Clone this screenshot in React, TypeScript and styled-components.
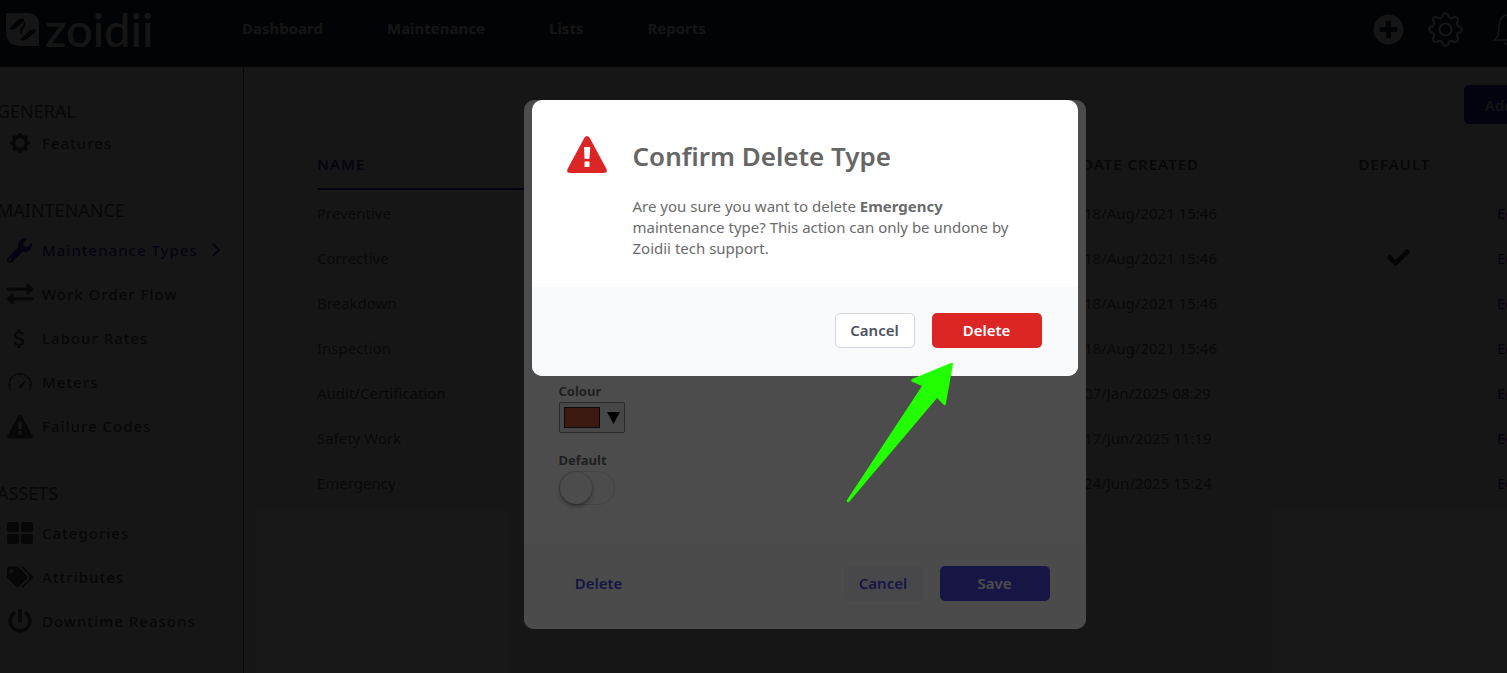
import React from 'react';
import styled, { createGlobalStyle } from 'styled-components';
import { FaWrench, FaExchangeAlt, FaTags, FaPowerOff, FaPlusCircle, FaCheck } from 'react-icons/fa';
import { MdAttachMoney } from 'react-icons/md';
import { BsGear } from 'react-icons/bs';

const GlobalStyle = createGlobalStyle`
  *, *::before, *::after { box-sizing: border-box; }
  body {
    margin: 0;
    overflow: hidden;
    background: #fff;
    font-family: 'Noto Sans', 'Open Sans', sans-serif;
    font-size: 15px;
    color: #6b6b6b;
  }
  button, input { font: inherit; }
  button { cursor: pointer; }
`;

const Frame = styled.div`
  position: relative;
  width: calc(100% + 102px);
  height: 100vh;
  overflow: hidden;
  display: flex;
  flex-direction: column;
`;

const TopBar = styled.header`
  display: flex;
  align-items: center;
  flex: none;
  height: 67px;
  padding: 0 86px 9px 6px;
  background: #1c2333;
`;

const Brand = styled.a`
  display: flex;
  align-items: center;
  gap: 6px;
  width: 236px;
  color: #f3f4f6;
  font-family: Lato, sans-serif;
  font-size: 47px;
  font-weight: 500;
  line-height: 46px;
  text-decoration: none;
`;

const MainNav = styled.nav`
  display: flex;
  gap: 64px;
  flex: 1;
  padding-bottom: 2px;
`;

const NavLink = styled.a`
  color: #e5e7eb;
  font-weight: 700;
  text-decoration: none;
`;

const TopActions = styled.div`
  display: flex;
  align-items: center;
  gap: 24px;
  color: #f3f4f6;
`;

const IconButton = styled.button`
  display: flex;
  padding: 0;
  border: 0;
  background: none;
  color: inherit;
`;

const Columns = styled.div`
  display: flex;
  flex: 1;
  min-height: 0;
`;

const Sidebar = styled.aside`
  display: flex;
  flex-direction: column;
  gap: 36px;
  flex: none;
  width: 244px;
  padding-top: 33px;
  border-right: 1px solid #666;
`;

const Group = styled.section``;

const GroupTitle = styled.h2<{ $gap: number }>`
  margin: 0 0 ${(p) => p.$gap}px -3px;
  color: #555;
  font-size: 18px;
  font-weight: 400;
  line-height: 23px;
`;

const GroupItems = styled.div`
  display: flex;
  flex-direction: column;
  gap: 4px;
`;

const SideLink = styled.a<{ $active?: boolean }>`
  display: flex;
  align-items: center;
  gap: 9px;
  height: 40px;
  padding-left: 6px;
  color: ${(p) => (p.$active ? '#3a33b8' : '#555')};
  font-weight: 500;
  letter-spacing: 1px;
  text-decoration: none;
`;

const SideIcon = styled.span`
  display: flex;
  justify-content: center;
  width: 27px;
`;

const Chevron = styled.svg`
  margin-left: 5px;
`;

const Main = styled.main`
  display: flex;
  flex-direction: column;
  flex: 1;
  padding: 18px 36px 0 54px;
`;

const Toolbar = styled.div`
  display: flex;
  justify-content: flex-end;
  margin-bottom: 16px;
`;

const AddButton = styled.button`
  width: 109px;
  height: 39px;
  border: 0;
  border-radius: 5px;
  background: #2a22a8;
  color: #d1d5db;
  font-weight: 600;
`;

const TypesTable = styled.table`
  width: 100%;
  table-layout: fixed;
  border-collapse: collapse;
  text-align: left;
`;

const HeadCell = styled.th<{ $center?: boolean; $sorted?: boolean }>`
  height: 50px;
  padding: ${(p) => (p.$sorted ? '0 0 0 19px' : '0 0 2px')};
  background: #f9fafb;
  color: ${(p) => (p.$sorted ? '#3a33b8' : '#555')};
  font-weight: 600;
  letter-spacing: 1px;
  text-align: ${(p) => (p.$center ? 'center' : 'left')};
`;

const SortedLabel = styled.span`
  display: block;
  height: 50px;
  border-bottom: 2px solid #2a22a8;
  line-height: 48px;
`;

const Cell = styled.td<{ $first?: boolean; $center?: boolean }>`
  height: 45px;
  padding: ${(p) => (p.$first ? '0 0 0 19px' : p.$center ? '0 0 0 8px' : '0 0 0 2px')};
  color: #666;
  text-align: ${(p) => (p.$center ? 'center' : 'left')};

  svg { display: block; margin: 0 auto; color: #333; }
`;

const EditLink = styled.a`
  padding-left: 28px;
  color: #3a33b8;
  text-decoration: none;
`;

const Overlay = styled.div`
  position: absolute;
  inset: 0;
  display: flex;
  align-items: flex-start;
  justify-content: center;
  padding-top: 100px;
  background: rgba(0, 0, 0, 0.7);
`;

const EditDialog = styled.div`
  display: flex;
  flex-direction: column;
  width: 562px;
  min-height: 529px;
  border-radius: 10px;
  background: #fff;
  overflow: hidden;
`;

const EditForm = styled.div`
  display: flex;
  flex-direction: column;
  align-items: flex-start;
  justify-content: flex-end;
  flex: 1;
  padding: 0 35px 39px;
`;

const FieldLabel = styled.label`
  color: #6b6b6b;
  font-size: 13px;
  font-weight: 700;
  line-height: 21px;
`;

const ColourPicker = styled.button`
  display: flex;
  align-items: center;
  gap: 7px;
  width: 66px;
  height: 31px;
  margin-bottom: 17px;
  padding: 0 4px;
  border: 1px solid #919191;
  border-radius: 2px;
  background: #eee;
`;

const Swatch = styled.span`
  width: 36px;
  height: 21px;
  border: 1px solid #222;
  background: #c8553a;
`;

const Toggle = styled.input`
  appearance: none;
  display: flex;
  align-items: center;
  width: 56px;
  height: 34px;
  margin: 0;
  border: 1px solid #e2e2e2;
  border-radius: 17px;

  &::before {
    content: '';
    width: 32px;
    height: 32px;
    border-radius: 50%;
    background: #fff;
    box-shadow: 0 2px 4px rgba(0, 0, 0, 0.4), 0 0 1px rgba(0, 0, 0, 0.3);
  }
`;

const DialogFooter = styled.footer<{ $spread?: boolean }>`
  display: flex;
  justify-content: ${(p) => (p.$spread ? 'space-between' : 'flex-end')};
  padding: ${(p) => (p.$spread ? '22px 36px 28px' : '26px 36px 28px')};
  background: ${(p) => (p.$spread ? '#fcfcfc' : '#f9fafc')};
`;

const Actions = styled.div`
  display: flex;
  gap: 17px;
`;

type Tone = 'plain' | 'danger' | 'soft' | 'primary' | 'link';

const tones: Record<Tone, string> = {
  plain: 'min-width: 80px; background: #fff; color: #4b5160; border: 1px solid #d4d5e0;',
  danger: 'min-width: 110px; background: #dc2626; color: #fff;',
  soft: 'min-width: 79px; background: #f0f0fa; color: #4f46e5;',
  primary: 'min-width: 110px; background: #4f46e5; color: #fff;',
  link: 'min-width: 78px; background: none; color: #4f46e5;',
};

const Button = styled.button<{ $tone: Tone }>`
  height: 35px;
  padding: 0 0 2px;
  border: 0;
  border-radius: 5px;
  font-weight: 600;
  ${(p) => tones[p.$tone]}
`;

const ConfirmDialog = styled.div`
  position: relative;
  width: 546px;
  border-radius: 10px;
  background: #fff;
`;

const ConfirmBody = styled.div`
  display: flex;
  gap: 26px;
  padding: 36px 35px 28px;
`;

const DangerMark = styled.span`
  color: #dc2626;
`;

const ConfirmTitle = styled.h1`
  margin: 0 0 20px;
  color: #666;
  font-size: 26px;
  font-weight: 600;
  line-height: 40px;
`;

const ConfirmText = styled.p`
  max-width: 400px;
  margin: 0;
  color: #6b6b6b;
  line-height: 21px;
`;

const ConfirmFooter = styled(DialogFooter)`
  border-radius: 0 0 10px 10px;
`;

const Pointer = styled.svg`
  position: absolute;
  left: 314px;
  top: 262px;
`;

const LogoMark = () => (
  <svg width="33" height="33" viewBox="0 0 33 33" aria-hidden="true">
    <path d="M0 0H21Q33 0 33 12V33H15Q0 33 0 18Z" fill="#f3f4f6" />
    <g fill="#1c2333">
      <path d="M3 15.500L11 7.500Q14 4.500 18 6Q19 8 16 10L9 16Q6 18 3 15.500Z" />
      <path d="M18 8Q21 12 18 15Q15 18 16 22Q12 19 15 15Q18 12 18 8Z" />
      <path d="M14 26.500L22 19Q25 15 30 17Q30 20 27 21L21 26Q17 29 14 26.500Z" />
    </g>
  </svg>
);

const CogIcon = () => (
  <svg width="20" height="20" viewBox="0 0 20 20" fill="none" stroke="currentColor" aria-hidden="true">
    <circle cx="10" cy="10" r="6.500" strokeWidth="3.500" />
    {[0, 45, 90, 135, 180, 225, 270, 315].map((a) => (
      <path key={a} d="M8 2.500L8.800 0H11.200L12 2.500Z" fill="currentColor" stroke="none" transform={`rotate(${a} 10 10)`} />
    ))}
  </svg>
);

const WarningIcon = ({ width, height }: { width: number; height: number }) => (
  <svg width={width} height={height} viewBox="0 0 40 37" aria-hidden="true">
    <path
      fill="currentColor"
      fillRule="evenodd"
      d="M17.500 1.500Q20-1.500 22.500 1.500L39.500 33Q41 37 36.500 37H3.500Q-1 37 .5 33ZM17 11.500L17.500 22Q17.500 23 18.500 23H21.500Q22.500 23 22.500 22L23.200 11.500Q23.200 11 22.500 11H17.500Q17 11 17 11.500ZM17.500 26V30.500Q17.500 31 18 31H22Q22.500 31 22.500 30.500V26Q22.500 25.500 22 25.500H18Q17.500 25.500 17.500 26Z"
    />
  </svg>
);

const GaugeIcon = () => (
  <svg width="24" height="18" viewBox="0 0 24 18" fill="none" stroke="currentColor" aria-hidden="true">
    <path d="M2.500 17A11 11 0 1 1 21.500 17" strokeWidth="1.500" />
    <path d="M12 1V4M4.500 4.500L6.500 6.500M1 12H4M19.500 4.500L17.500 6.500M23 12H20" />
    <path d="M17 8L13.500 15L11 14Z" fill="currentColor" />
  </svg>
);

const TilesIcon = () => (
  <svg width="26" height="22" viewBox="0 0 26 22" fill="currentColor" aria-hidden="true">
    <rect width="12" height="10" rx="2" />
    <rect x="14" width="12" height="10" rx="2" />
    <rect y="12" width="12" height="10" rx="2" />
    <rect x="14" y="12" width="12" height="10" rx="2" />
  </svg>
);

const BellIcon = () => (
  <svg width="36" height="34" viewBox="-6 0 36 34" fill="none" stroke="currentColor" strokeWidth="1.500" aria-hidden="true">
    <path d="M15 3C9 3 6 8 6 14C6 22 5 25 1 28H29C25 25 24 22 24 14C24 8 21 3 15 3Z" />
    <path d="M15 0V3M11 30Q15 36 19 30" />
  </svg>
);

const groups = [
  { title: 'GENERAL', gap: 0, items: [{ label: 'Features', icon: <CogIcon /> }] },
  {
    title: 'MAINTENANCE',
    gap: 8,
    items: [
      { label: 'Maintenance Types', icon: <FaWrench size={25} />, active: true },
      { label: 'Work Order Flow', icon: <FaExchangeAlt size={26} /> },
      { label: 'Labour Rates', icon: <MdAttachMoney size={25} /> },
      { label: 'Meters', icon: <GaugeIcon /> },
      { label: 'Failure Codes', icon: <WarningIcon width={26} height={25} /> },
    ],
  },
  {
    title: 'ASSETS',
    gap: 8,
    items: [
      { label: 'Categories', icon: <TilesIcon /> },
      { label: 'Attributes', icon: <FaTags size={26} /> },
      { label: 'Downtime Reasons', icon: <FaPowerOff size={24} /> },
    ],
  },
];

const rows = [
  ['Preventive', '18/Aug/2021 15:46'],
  ['Corrective', '18/Aug/2021 15:46'],
  ['Breakdown', '18/Aug/2021 15:46'],
  ['Inspection', '18/Aug/2021 15:46'],
  ['Audit/Certification', '07/Jan/2025 08:29'],
  ['Safety Work', '17/Jun/2025 11:19'],
  ['Emergency', '24/Jun/2025 15:24'],
];

export default function App() {
  return (
    <>
      <GlobalStyle />
      <Frame>
        <TopBar>
          <Brand href="#"><LogoMark />zoidii</Brand>
          <MainNav>
            {['Dashboard', 'Maintenance', 'Lists', 'Reports'].map((n) => (
              <NavLink href="#" key={n}>{n}</NavLink>
            ))}
          </MainNav>
          <TopActions>
            <IconButton aria-label="Create"><FaPlusCircle size={31} /></IconButton>
            <IconButton aria-label="Settings"><BsGear size={35} /></IconButton>
            <IconButton aria-label="Notifications"><BellIcon /></IconButton>
          </TopActions>
        </TopBar>
        <Columns>
          <Sidebar>
            {groups.map((g) => (
              <Group key={g.title}>
                <GroupTitle $gap={g.gap}>{g.title}</GroupTitle>
                <GroupItems>
                  {g.items.map((i) => {
                    const active = 'active' in i;
                    return (
                      <SideLink href="#" key={i.label} $active={active}>
                        <SideIcon>{i.icon}</SideIcon>
                        {i.label}
                        {active && (
                          <Chevron width="9" height="14" viewBox="0 0 9 14" fill="none" stroke="currentColor" strokeWidth="2">
                            <path d="M1 1L7 7L1 13" />
                          </Chevron>
                        )}
                      </SideLink>
                    );
                  })}
                </GroupItems>
              </Group>
            ))}
          </Sidebar>
          <Main>
            <Toolbar><AddButton>Add Type</AddButton></Toolbar>
            <TypesTable>
              <colgroup>
                <col />
                <col style={{ width: 240 }} />
                <col style={{ width: 145 }} />
                <col style={{ width: 106 }} />
              </colgroup>
              <thead>
                <tr>
                  <HeadCell $sorted><SortedLabel>NAME</SortedLabel></HeadCell>
                  <HeadCell>DATE CREATED</HeadCell>
                  <HeadCell $center>DEFAULT</HeadCell>
                  <HeadCell aria-label="Actions" />
                </tr>
              </thead>
              <tbody>
                {rows.map(([name, date]) => (
                  <tr key={name}>
                    <Cell $first>{name}</Cell>
                    <Cell>{date}</Cell>
                    <Cell $center>{name === 'Corrective' && <FaCheck size={23} />}</Cell>
                    <Cell><EditLink href="#">Edit</EditLink></Cell>
                  </tr>
                ))}
              </tbody>
            </TypesTable>
          </Main>
        </Columns>

        <Overlay>
          <EditDialog role="dialog" aria-label="Edit type">
            <EditForm>
              <FieldLabel htmlFor="colour">Colour</FieldLabel>
              <ColourPicker id="colour" type="button">
                <Swatch />
                <svg width="13" height="12" viewBox="0 0 13 12" aria-hidden="true"><path d="M0 0H13L6.500 12Z" /></svg>
              </ColourPicker>
              <FieldLabel htmlFor="default">Default</FieldLabel>
              <Toggle id="default" type="checkbox" />
            </EditForm>
            <DialogFooter $spread>
              <Button $tone="link">Delete</Button>
              <Actions>
                <Button $tone="soft">Cancel</Button>
                <Button $tone="primary">Save</Button>
              </Actions>
            </DialogFooter>
          </EditDialog>
        </Overlay>

        <Overlay>
          <ConfirmDialog role="alertdialog" aria-labelledby="confirm-title">
            <ConfirmBody>
              <DangerMark><WarningIcon width={40} height={37} /></DangerMark>
              <div>
                <ConfirmTitle id="confirm-title">Confirm Delete Type</ConfirmTitle>
                <ConfirmText>
                  Are you sure you want to delete <strong>Emergency</strong> maintenance type? This action can only be
                  undone by Zoidii tech support.
                </ConfirmText>
              </div>
            </ConfirmBody>
            <ConfirmFooter>
              <Actions>
                <Button $tone="plain">Cancel</Button>
                <Button $tone="danger">Delete</Button>
              </Actions>
            </ConfirmFooter>
            <Pointer width="108" height="142" viewBox="0 0 108 142" aria-hidden="true">
              <path
                d="M105 1L66 17Q64 19 67 20L76 24L1 138Q0 141 3 140L91 36L98 43Q100 44 100 41L107 2Q107 0 105 1Z"
                fill="#21ff00"
              />
            </Pointer>
          </ConfirmDialog>
        </Overlay>
      </Frame>
    </>
  );
}
